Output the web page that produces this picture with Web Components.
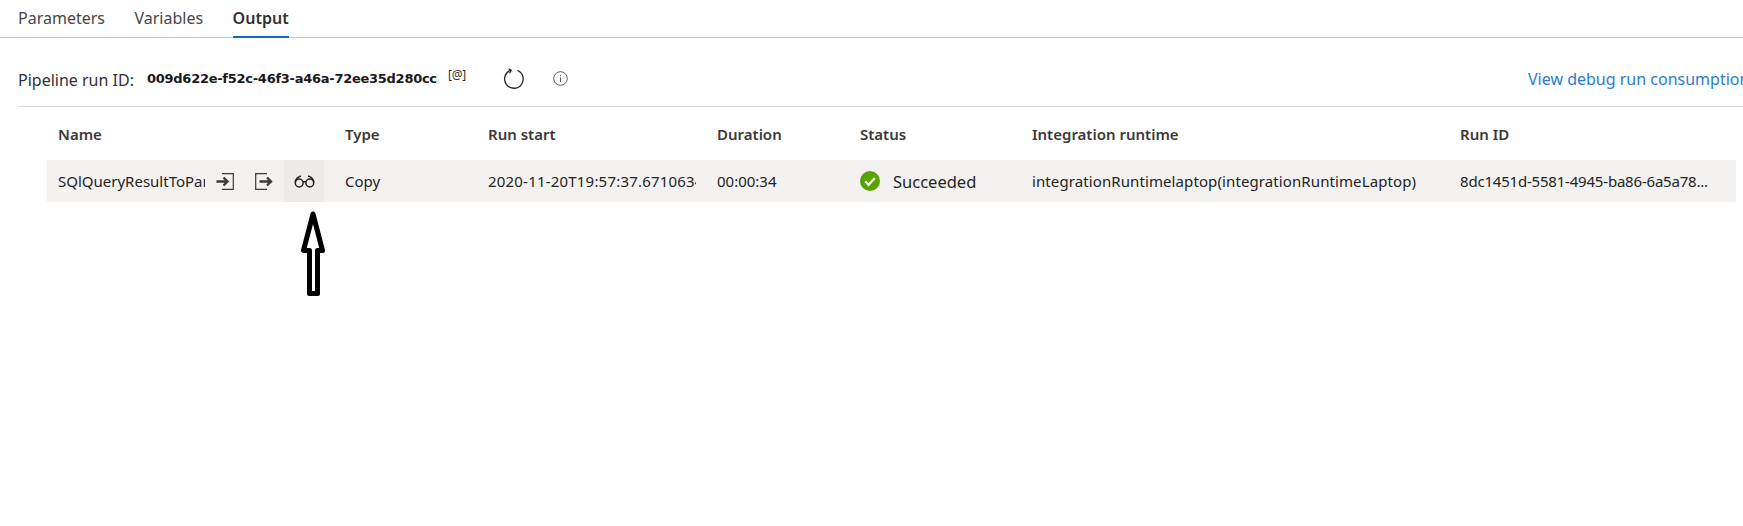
<!DOCTYPE html>
<html>
<head>
<meta charset="utf-8">
<title>Pipeline run output</title>
<style>
  html, body { margin: 0; padding: 0; background: #fff; overflow: hidden; }
  body { width: 1743px; height: 526px; font-family: "Noto Sans", "Open Sans", sans-serif; color: #323130; }
</style>
</head>
<body>
<run-tabs>
  <tab-item>Parameters</tab-item>
  <tab-item>Variables</tab-item>
  <tab-item active>Output</tab-item>
</run-tabs>
<run-toolbar run-id="009d622e-f52c-46f3-a46a-72ee35d280cc"></run-toolbar>
<run-table></run-table>

<script>
class TabItem extends HTMLElement {
    constructor() {
        super();
        this.attachShadow({ mode: 'open' });
        this.shadowRoot.innerHTML = `
      <style>
        :host {
          display: block;
          height: 38px;
          box-sizing: border-box;
          padding-top: 5px;
          font-size: 16px;
          line-height: 26px;
          color: #484644;
        }
        :host([active]) {
          font-weight: 600;
          color: #323130;
          box-shadow: inset 0 -2px 0 #0f6cbd;
        }
      </style>
      <slot></slot>
    `;
    }
}

class RunTabs extends HTMLElement {
    constructor() {
        super();
        this.attachShadow({ mode: 'open' });
        this.shadowRoot.innerHTML = `
      <style>
        :host {
          display: flex;
          gap: 29.5px;
          height: 38px;
          box-sizing: border-box;
          padding-left: 18px;
          border-bottom: 1px solid #c8c6c4;
        }
      </style>
      <slot></slot>
    `;
    }
}

class RunToolbar extends HTMLElement {
    constructor() {
        super();
        this.attachShadow({ mode: 'open' });
        const runId = this.getAttribute('run-id');
        this.shadowRoot.innerHTML = `
      <style>
        :host {
          display: flex;
          align-items: center;
          height: 69px;
          margin-left: 18px;
          padding-top: 13px;
          box-sizing: border-box;
          border-bottom: 1px solid #dedede;
          white-space: nowrap;
          overflow: hidden;
        }
        .label { font-size: 16px; width: 129px; flex: none; color: #323130; position: relative; top: 1px; }
        .id { font-family: "DejaVu Sans", sans-serif; font-weight: 700; font-size: 13px; width: 301px; flex: none; color: #1b1a19; letter-spacing: -0.27px; }
        .at { font-size: 12px; width: 55px; flex: none; position: relative; top: -4px; color: #323130; letter-spacing: -0.2px; }
        svg { display: block; flex: none; }
        .info { margin-left: 28px; }
        a { margin-left: auto; color: #2b7cd3; font-size: 16px; width: 215px; flex: none; overflow: hidden; }
      </style>
      <span class="label">Pipeline run ID:</span>
      <span class="id">${runId}</span>
      <span class="at">[@]</span>
      <svg width="22" height="22" viewBox="0 0 22 22" fill="none" stroke="#252423" stroke-width="1.3">
        <path d="M7.8 2.2A9.3 9.3 0 1 0 14.5 2.4" />
        <path d="M5.6 0.8 8.2 2.2 6.6 5.2" />
      </svg>
      <svg class="info" width="15" height="15" viewBox="0 0 15 15" fill="none" stroke="#605e5c">
        <circle cx="7.5" cy="7.5" r="6.8" />
        <path d="M7.5 6.4v4.6M7.5 3.8v1.4" />
      </svg>
      <a>View debug run consumption</a>
    `;
    }
}

const COLUMNS = 'grid-template-columns: 287px 143px 229px 143px 172px 428px 1fr;';

class RunTable extends HTMLElement {
    constructor() {
        super();
        this.attachShadow({ mode: 'open' });
        this.shadowRoot.innerHTML = `
      <style>
        :host { display: block; position: relative; height: 419px; margin: 0 7px 0 47px; }
        .head, .row { display: grid; ${COLUMNS} align-items: center; white-space: nowrap; }
        .head { height: 53px; font-size: 15px; font-weight: 600; color: #3b3a39; }
        .head span { padding-left: 11px; }
        .row { height: 42px; background: #f3f2f1; font-size: 15px; color: #252423; }
        .cell { padding-left: 11px; overflow: hidden; }
        .name { display: flex; align-items: center; height: 100%; padding-left: 11px; }
        .name .text { width: 147px; overflow: hidden; flex: none; }
        .btn { display: flex; align-items: center; justify-content: center; height: 100%; flex: none; }
        .btn.on { background: #edebe9; width: 40px; }
        .start { width: 208px; overflow: hidden; letter-spacing: 0.2px; }
        .status { display: flex; align-items: center; gap: 13px; font-size: 16.5px; padding-left: 11px; }
        .runtime { letter-spacing: 0.1px; }
        .run-id { letter-spacing: -0.2px; }
        svg { display: block; flex: none; }
        .arrow { position: absolute; left: 253px; top: 101px; }
      </style>
      <div class="head">
        <span>Name</span><span>Type</span><span>Run start</span><span>Duration</span><span>Status</span><span>Integration runtime</span><span>Run ID</span>
      </div>
      <div class="row">
        <div class="name">
          <span class="text">SQlQueryResultToParquet</span>
          <span class="btn" style="width:39px">
            <svg width="18" height="17" viewBox="0 0 18 17" fill="none" stroke="#3b3a39">
              <path d="M6 .7H17.3V16.3H6" stroke-width="1.2"/><path d="M.5 8.5H11M7.5 4.5l4 4-4 4" stroke-width="2.4"/>
            </svg>
          </span>
          <span class="btn" style="width:40px">
            <svg width="18" height="17" viewBox="0 0 18 17" fill="none" stroke="#3b3a39">
              <path d="M12 .7H.7V16.3H12" stroke-width="1.2"/><path d="M4.5 8.5H15.5M12 4.5l4 4-4 4" stroke-width="2.4"/>
            </svg>
          </span>
          <span class="btn on">
            <svg width="21" height="13" viewBox="0 0 21 13" fill="none" stroke="#252423" stroke-width="1.5">
              <circle cx="5.2" cy="8" r="3.9" /><circle cx="15.8" cy="8" r="3.9" />
              <path d="M9 6.8h3M1.2 7.5C1.6 4 3.2 1.8 7 1M19.8 7.5C19.4 4 17.8 1.8 14 1"/>
            </svg>
          </span>
        </div>
        <div class="cell">Copy</div>
        <div class="cell"><div class="start">2020-11-20T19:57:37.6710634Z</div></div>
        <div class="cell">00:00:34</div>
        <div class="cell status">
          <svg width="20" height="20" viewBox="0 0 20 20">
            <circle cx="10" cy="10" r="10" fill="#57a300"/>
            <path d="M5.2 10.4 8.6 13.8 14.8 7" fill="none" stroke="#fff" stroke-width="2.2"/>
          </svg>
          <span>Succeeded</span>
        </div>
        <div class="cell runtime">integrationRuntimelaptop(integrationRuntimeLaptop)</div>
        <div class="cell run-id">8dc1451d-5581-4945-ba86-6a5a78...</div>
      </div>
      <svg class="arrow" width="27" height="90" viewBox="0 0 27 90" fill="none" stroke="#000" stroke-width="5" stroke-linejoin="round">
        <path d="M13 6 3.5 42.5H9.5V85.5H17.5V42.5H22.5Z"/>
      </svg>
    `;
    }
}

customElements.define('tab-item', TabItem);
customElements.define('run-tabs', RunTabs);
customElements.define('run-toolbar', RunToolbar);
customElements.define('run-table', RunTable);
</script>
</body>
</html>
